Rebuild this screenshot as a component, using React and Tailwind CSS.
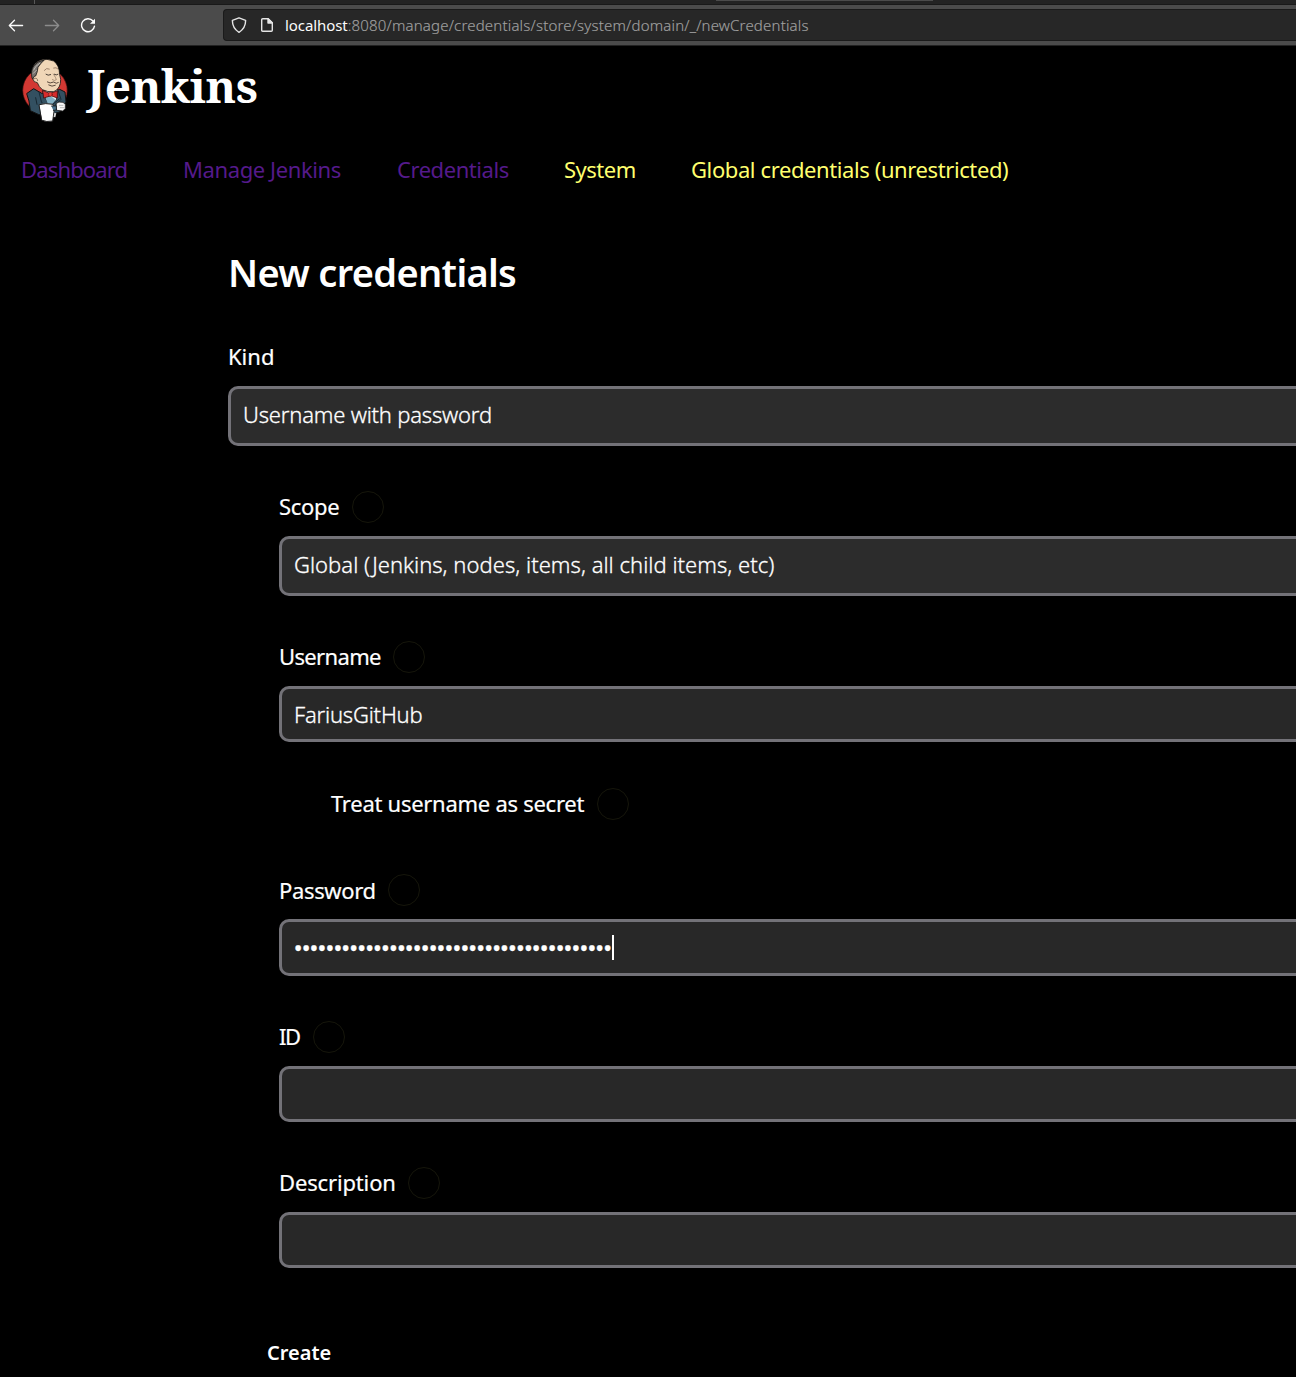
import React from "react";

const PASSWORD = "•".repeat(40);

function Butler() {
  return (
    <svg className="h-[74px] w-[60px] shrink-0" viewBox="0 0 180 222" strokeLinecap="round" strokeLinejoin="round">
      <circle cx="90" cy="115" r="67" fill="#d33833" stroke="#2a0c0c" strokeWidth="2" />
      <path d="M36 124 L56 110 L80 124 L112 122 L134 112 L150 120 L153 150 L134 180 L112 186 L72 188 L46 176 L42 148 Z" fill="#335061" stroke="#111" strokeWidth="3" />
      <path d="M82 118 L96 148 L108 156 L124 144 L128 114 Z" fill="#dfe6ea" stroke="#111" strokeWidth="2" />
      <path d="M92 138 L104 130 L122 144 L112 156 L98 154 Z" fill="#81b0c4" />
      <path d="M72 120 L80 152 L96 160 M130 118 L138 142 L120 160" fill="none" stroke="#182a36" strokeWidth="3" />
      <path d="M54 50 Q56 32 76 25 Q96 18 116 27 Q133 39 134 68 Q139 83 136 94 Q132 113 116 119 Q98 121 82 113 Q71 104 67 92 Q56 92 53 80 Q51 70 54 50Z" fill="#f0d6b7" stroke="#191716" strokeWidth="2.5" />
      <path d="M51 78 Q46 56 56 42 Q66 27 88 24 Q76 34 69 46 Q67 62 62 72 Q57 70 54 80 Z" fill="#77736f" stroke="#191716" strokeWidth="2.5" />
      <path d="M56 54 Q60 42 74 34 M55 64 L64 55" fill="none" stroke="#bcb9b4" strokeWidth="3" />
      <path d="M58 80 Q67 75 68 86" fill="none" stroke="#5b4636" strokeWidth="2" />
      <path d="M88 55 Q94 46 103 51 M116 48 Q124 45 128 50" fill="none" stroke="#8b705c" strokeWidth="2.5" />
      <path d="M93 67 Q99 72 107 68 M118 67 Q124 71 129 67" fill="none" stroke="#29221e" strokeWidth="2.5" />
      <path d="M115 66 Q124 79 124 83 Q119 88 112 83" fill="none" stroke="#8b705c" strokeWidth="2" />
      <path d="M97 90 Q105 96 116 90 Q124 97 130 92 M101 99 Q111 106 121 100" fill="none" stroke="#3b2c24" strokeWidth="2.5" />
      <path d="M84 116 L104 124 L127 117 L127 138 L108 131 L87 138 Z" fill="#d92c2c" stroke="#4a1010" strokeWidth="2.5" />
      <circle cx="106" cy="127" r="6" fill="#ef3d3a" stroke="#701818" strokeWidth="2" />
      <path d="M62 137 L66 157 M133 141 L112 158" fill="none" stroke="#162630" strokeWidth="3" />
      <path d="M73 158 Q91 152 114 157 L117 179 L113 207 Q94 211 81 205 Z" fill="#fff" stroke="#222" strokeWidth="3" />
      <path d="M118 182 L124 184 L121 196 L116 195 Z" fill="#d8d8d8" />
      <path d="M124 154 L132 150 L144 151 L151 157 L151 170 L143 177 L126 175 Z" fill="#f7f7f7" stroke="#222" strokeWidth="2.5" />
      <path d="M133 160 L144 160 M136 167 L147 167" stroke="#9b9b9b" strokeWidth="2" />
      <path d="M109 162 L124 162 L124 174 L115 175" fill="#49728b" stroke="#111" strokeWidth="2" />
    </svg>
  );
}

function BrowserBar() {
  return (
    <div>
      <div className="flex h-[5px] border-b border-[#191919] bg-[#232323]">
        <div className="ml-[34px] h-1 w-px bg-[#585858]" />
        <div className="ml-[681px] h-px w-[217px] bg-[#4b4b4b]" />
      </div>
      <div className="flex h-10 items-center bg-[#4b4b4b]">
        <svg className="ml-2 h-4 w-4" viewBox="0 0 16 16" fill="none" stroke="#fbfbfb" strokeWidth="1.3" strokeLinecap="round" strokeLinejoin="round">
          <path d="M14.6 8.5H1.3M6.5 3.3L1.3 8.5L6.5 13.7" />
        </svg>
        <svg className="ml-5 h-4 w-4" viewBox="0 0 16 16" fill="none" stroke="#8c8c8c" strokeWidth="1.3" strokeLinecap="round" strokeLinejoin="round">
          <path d="M1.4 8.5H14.7M9.5 3.3L14.7 8.5L9.5 13.7" />
        </svg>
        <svg className="ml-5 h-4 w-4" viewBox="0 0 16 16" fill="none" stroke="#fbfbfb" strokeWidth="1.4" strokeLinecap="round">
          <path d="M13 4A6.5 6.5 0 1 0 14.5 9.2" />
          <path d="M15 1.7V6.7H10Z" fill="#fbfbfb" stroke="none" />
        </svg>
        <div className="ml-[127px] flex h-8 flex-1 items-center rounded-l border border-r-0 border-[#1a1a1a] bg-[#272727]">
          <svg className="ml-[7px] h-4 w-4" viewBox="0 0 16 16" fill="none" stroke="#e5e5e5" strokeWidth="1.4" strokeLinejoin="round">
            <path d="M8 .8L14.6 3.3Q14.8 11 8 15.3Q1.2 11 1.4 3.3Z" />
          </svg>
          <svg className="ml-3 h-4 w-4" viewBox="0 0 16 16" fill="none" stroke="#e5e5e5" strokeWidth="1.4" strokeLinejoin="round">
            <path d="M3.7 1.7H9.2L13.3 5.8V13.3Q13.3 14.3 12.3 14.3H3.7Q2.7 14.3 2.7 13.3V2.7Q2.7 1.7 3.7 1.7Z" />
            <path d="M9 1.7V6H13.3Z" fill="#e5e5e5" />
          </svg>
          <p className="ml-2.5 whitespace-nowrap text-[15px] font-light text-[#a0a0a0]">
            <span className="font-normal tracking-[-0.08px] text-[#fbfbfb]">localhost</span>
            <span className="tracking-[0.185px] [-webkit-text-stroke:0.15px]">:8080/manage/credentials/store/system/domain/_/newCredentials</span>
          </p>
        </div>
      </div>
      <div className="h-px bg-[#222]" />
    </div>
  );
}

function Label({ children, className }) {
  return (
    <div className="mb-[13px] flex h-8 items-center">
      <label className={"h-[34px] shrink-0 whitespace-nowrap text-[22px] leading-8 [-webkit-text-stroke:0.2px] " + className}>{children}</label>
      <span className="h-8 w-8 rounded-full border border-[#16160b]" />
    </div>
  );
}

function Field({ children, className }) {
  return (
    <div className={"flex items-center whitespace-nowrap rounded-l-[10px] border-[3px] border-r-0 border-[#737278] pl-3 text-[22px] [-webkit-text-stroke:0.3px] " + className}>
      {children}
    </div>
  );
}

export default function App() {
  return (
    <div className="h-[1377px] w-[1296px] overflow-hidden bg-black font-['Noto_Sans',sans-serif] text-white">
      <BrowserBar />
      <header className="flex h-[92px] pl-[15px] pt-1.5">
        <Butler />
        <span className="ml-3 mt-0.5 font-['Noto_Serif',serif] text-[46px] font-bold leading-[62px] tracking-[-0.45px]">Jenkins</span>
      </header>
      <nav className="mt-[15px] flex h-[33px] whitespace-nowrap pl-[21px] text-[22px] leading-8 text-[#551a8b]">
        <a className="w-[162px] tracking-[-0.85px]">Dashboard</a>
        <a className="w-[214px] tracking-[-0.4px]">Manage Jenkins</a>
        <a className="w-[167px] tracking-[-0.45px]">Credentials</a>
        <a className="w-[127px] tracking-[-0.5px] text-[#ffff6e]">System</a>
        <a className="tracking-[-0.4px] text-[#ffff6e]">Global credentials (unrestricted)</a>
      </nav>
      <main className="pl-[228px]">
        <h1 className="mt-[59px] h-[55px] whitespace-nowrap text-[38px] font-semibold leading-[54px] tracking-[-0.67px]">New credentials</h1>
        <div className="mt-10 h-[33px] text-[22px] leading-8 [-webkit-text-stroke:0.2px]">Kind</div>
        <Field className="h-[60px] mt-[13px] bg-[#2c2c2c] pb-[3px] font-light tracking-[-0.2px]">Username with password</Field>
        <section className="ml-[51px] mt-[45px]">
          <Label className="w-[73px] tracking-[-0.3px]">Scope</Label>
          <Field className="h-[60px] bg-[#2c2c2c] pb-[3px] font-light tracking-[0.03px]">Global (Jenkins, nodes, items, all child items, etc)</Field>
          <div className="mt-[45px]">
            <Label className="w-[114.4px] tracking-[-0.65px]">Username</Label>
            <Field className="h-14 bg-[#282828] font-light tracking-[-0.2px]">FariusGitHub</Field>
          </div>
          <div className="ml-[52px] mt-[46px]">
            <Label className="w-[266px] tracking-[-0.27px]">Treat username as secret</Label>
          </div>
          <div className="mt-[54px]">
            <Label className="w-[109px] pt-px tracking-[-0.35px]">Password</Label>
            <Field className="h-[57px] bg-[#282828] font-medium">
              <span className="w-[318px] tracking-[-0.335px]">{PASSWORD}</span>
              <span className="h-[25px] w-0.5 bg-white" />
            </Field>
          </div>
          <div className="mt-[45px]">
            <Label className="w-[34px] tracking-[-1.5px]">ID</Label>
            <Field className="h-14 bg-[#282828]" />
          </div>
          <div className="mt-[45px]">
            <Label className="w-[129px] tracking-[-0.15px]">Description</Label>
            <Field className="h-14 bg-[#282828]" />
          </div>
        </section>
        <button className="ml-[39px] mt-[69px] block h-8 text-[20px] font-semibold leading-8">Create</button>
      </main>
    </div>
  );
}
